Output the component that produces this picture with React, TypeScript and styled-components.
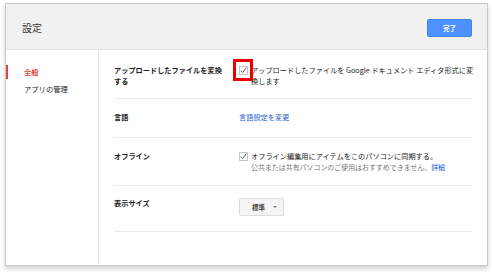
import React from "react";
import styled, { createGlobalStyle } from "styled-components";

const GlobalStyle = createGlobalStyle`
  html, body { margin: 0; padding: 0; background: #ffffff; }
  body {
    font-family: "Noto Sans CJK JP", "Noto Sans", Arial, sans-serif;
    color: #222;
  }
  * { box-sizing: border-box; }
`;

const Page = styled.div`
  width: 492px;
  height: 272px;
  padding: 3px 0 0 5px;
`;

const Dialog = styled.div`
  width: 483px;
  height: 263px;
  border: 1px solid #c9c9c9;
  box-shadow: 0 3px 5px rgba(0, 0, 0, 0.18);
  background: #fff;
  display: flex;
  flex-direction: column;
`;

const Header = styled.div`
  height: 46px;
  flex: none;
  background: #f1f1f1;
  border-bottom: 1px solid #e2e2e2;
  display: flex;
  align-items: center;
  padding: 0 15px 0 16px;
`;

const Title = styled.div`
  font-size: 10px;
  color: #333;
  line-height: 12px;
  margin-top: 2px;
`;

const DoneButton = styled.button`
  margin-left: auto;
  width: 45px;
  height: 18px;
  margin-top: 2px;
  background: #4d90fe;
  border: 1px solid #3f83f0;
  border-radius: 2px;
  color: #fff;
  font-family: inherit;
  font-weight: bold;
  font-size: 6.5px;
  padding: 0;
`;

const Body = styled.div`
  flex: 1;
  display: flex;
`;

const Sidebar = styled.div`
  width: 93px;
  flex: none;
  border-right: 1px solid #e5e5e5;
  padding-top: 15px;
  display: flex;
  flex-direction: column;
  gap: 3px;
`;

const NavItem = styled.div<{ $active?: boolean }>`
  height: 14px;
  line-height: 14px;
  font-size: 7.3px;
  padding-left: 16px;
  color: ${(p) => (p.$active ? "#dd4b39" : "#222")};
  font-weight: ${(p) => (p.$active ? "bold" : "normal")};
  border-left: 2px solid ${(p) => (p.$active ? "#dd4b39" : "transparent")};
`;

const Content = styled.div`
  flex: 1;
  padding: 0 15px 0 15px;
`;

const Row = styled.div<{ $pad: string }>`
  display: grid;
  grid-template-columns: 125px 1fr;
  padding: ${(p) => p.$pad};
  border-bottom: 1px solid #ebebeb;
`;

const Label = styled.div`
  font-weight: bold;
  font-size: 7.2px;
  line-height: 11px;
  color: #222;
  padding-right: 15px;
`;

const Value = styled.div`
  font-size: 7.2px;
  line-height: 11px;
  color: #222;
  min-width: 0;
`;

const CheckLine = styled.div`
  display: flex;
  align-items: flex-start;
  gap: 3px;
  width: 240px;
`;

const CheckWrap = styled.span`
  position: relative;
  flex: none;
  width: 9px;
  height: 9px;
  margin-top: 1px;
  display: block;
`;

const Highlight = styled.span`
  position: absolute;
  left: -6px;
  top: -7px;
  width: 20px;
  height: 22px;
  border: 3px solid #ee0000;
`;

const CheckText = styled.div``;

const Sub = styled.div`
  color: #777;
  font-size: 6.95px;
`;

const Link = styled.a`
  color: #1a5fce;
  text-decoration: none;
`;

const Select = styled.div`
  display: inline-flex;
  align-items: center;
  width: 45px;
  height: 18px;
  padding: 0 4px 0 12px;
  background: #f5f5f5;
  border: 1px solid #dcdcdc;
  border-radius: 2px;
  font-size: 6.6px;
  color: #444;
  font-weight: bold;
`;

const Caret = styled.span`
  margin-left: auto;
  margin-right: 2px;
  width: 0;
  height: 0;
  border-left: 2px solid transparent;
  border-right: 2px solid transparent;
  border-top: 2px solid #777;
`;

const CheckIcon = () => (
  <svg width="9" height="9" viewBox="0 0 9 9">
    <rect x="0.5" y="0.5" width="8" height="8" fill="#fff" stroke="#c6c6c6" />
    <path d="M1.8 4.6 L3.6 6.5 L7.4 1.6" fill="none" stroke="#555" strokeWidth="1" />
  </svg>
);

export default function App() {
  return (
    <>
      <GlobalStyle />
      <Page>
        <Dialog>
          <Header>
            <Title>設定</Title>
            <DoneButton>完了</DoneButton>
          </Header>
          <Body>
            <Sidebar>
              <NavItem $active>全般</NavItem>
              <NavItem>アプリの管理</NavItem>
            </Sidebar>
            <Content>
              <Row $pad="15px 0 11px">
                <Label>アップロードしたファイルを変換する</Label>
                <Value>
                  <CheckLine>
                    <CheckWrap>
                      <CheckIcon />
                      <Highlight />
                    </CheckWrap>
                    <CheckText>
                      アップロードしたファイルを Google ドキュメント エディタ形式に変換します
                    </CheckText>
                  </CheckLine>
                </Value>
              </Row>
              <Row $pad="13px 0 14px">
                <Label>言語</Label>
                <Value>
                  <Link>言語設定を変更</Link>
                </Value>
              </Row>
              <Row $pad="13px 0 12px">
                <Label>オフライン</Label>
                <Value>
                  <CheckLine>
                    <CheckWrap>
                      <CheckIcon />
                    </CheckWrap>
                    <CheckText>
                      オフライン編集用にアイテムをこのパソコンに同期する。
                      <Sub>
                        公共または共有パソコンのご使用はおすすめできません。<Link>詳細</Link>
                      </Sub>
                    </CheckText>
                  </CheckLine>
                </Value>
              </Row>
              <Row $pad="12px 0 15px">
                <Label>表示サイズ</Label>
                <Value>
                  <Select>
                    標準
                    <Caret />
                  </Select>
                </Value>
              </Row>
            </Content>
          </Body>
        </Dialog>
      </Page>
    </>
  );
}
